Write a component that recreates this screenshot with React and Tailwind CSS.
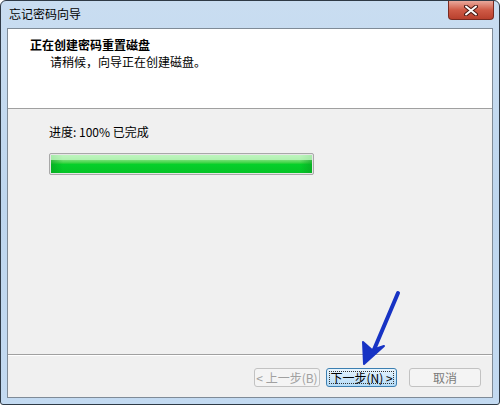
export default function App() {
  const font = { fontFamily: '"Noto Sans CJK SC", "Liberation Sans", sans-serif' };
  return (
    <div className="relative w-[500px] h-[405px] bg-white" style={font}>
      <div className="w-[500px] h-[405px] flex flex-col border border-[#2f3a46] rounded-t-[6px] rounded-b-[3px] bg-gradient-to-b from-[#c9ddf1] via-[#bed6ee] to-[#c3daf1] px-[6px] pb-[6px] overflow-hidden">
        <div className="h-[27px] flex justify-between shrink-0">
          <div className="pl-[2px] pt-[5px] text-[12px] leading-[16px] text-black">忘记密码向导</div>
          <div className="w-[46px] h-[19px] -mr-[1px] rounded-b-[4px] border border-t-0 border-[#7a2a20] bg-gradient-to-b from-[#e9a89c] via-[#cf5a46] to-[#b8402d] flex items-center justify-center">
            <svg width="14" height="11" viewBox="0 0 14 11">
              <path d="M2 1.5 L12 9.5 M12 1.5 L2 9.5" stroke="#4a1a14" strokeWidth="4" strokeLinecap="round" />
              <path d="M2 1.5 L12 9.5 M12 1.5 L2 9.5" stroke="#ffffff" strokeWidth="2" strokeLinecap="round" />
            </svg>
          </div>
        </div>
        <div className="flex-1 flex flex-col bg-[#f0f0f0] border border-[#7f8b97]">
          <div className="h-[80px] shrink-0 bg-white border-b border-[#a0a0a0] pl-[22px] pt-[7px]">
            <div className="text-[12px] leading-[18px] font-bold text-black">正在创建密码重置磁盘</div>
            <div className="pl-[20px] text-[12px] leading-[16px] text-black">请稍候，向导正在创建磁盘。</div>
          </div>
          <div className="flex-1 pl-[41px] pt-[15px]">
            <div className="text-[12px] leading-[16px] text-black">进度: 100% 已完成</div>
            <div className="mt-[13px] w-[265px] h-[22px] border border-[#a8a8a8] rounded-[2px] p-[1px] bg-[#e6e6e6]">
              <div className="w-full h-full relative bg-gradient-to-b from-[#b6f2b6] via-[#05d02b] to-[#04c426]">
                <div className="absolute left-0 top-0 bottom-0 w-[12px] bg-gradient-to-r from-[#0a9f22] to-transparent opacity-60" />
                <div className="absolute right-0 top-0 bottom-0 w-[12px] bg-gradient-to-l from-[#0a9f22] to-transparent opacity-60" />
                <div className="absolute left-0 right-0 top-0 h-[5px] bg-[#bff5bf] opacity-80" />
              </div>
            </div>
          </div>
          <div className="h-[2px] shrink-0 border-t border-[#a0a0a0] border-b border-b-white" />
          <div className="h-[41px] shrink-0 flex items-center justify-end pr-[11px]">
            <div className="w-[66px] h-[19px] mt-[2px] rounded-[3px] border border-[#c2c2c2] bg-[#f4f4f4] flex items-center justify-center text-[12px] text-[#a0a0a0]">&lt; 上一步(B)</div>
            <div className="ml-[6px] w-[71px] h-[19px] mt-[2px] rounded-[3px] border border-[#3c7fb1] bg-gradient-to-b from-[#e8f5fd] to-[#b4dbf7] p-[2px]">
              <div className="w-full h-full border border-dotted border-[#333] flex items-center justify-center text-[12px] text-black">下一步(N) &gt;</div>
            </div>
            <div className="ml-[12px] w-[72px] h-[19px] mt-[2px] rounded-[3px] border border-[#c2c2c2] bg-[#f4f4f4] flex items-center justify-center text-[12px] text-[#7a7a7a]">取消</div>
          </div>
        </div>
      </div>
      <svg className="absolute left-0 top-0" width="500" height="405" viewBox="0 0 500 405">
        <path d="M398 293 L373 352" stroke="#1733c4" strokeWidth="4" strokeLinecap="round" fill="none" />
        <path d="M364 364 L363 342 L372 350 L384 346 Z" fill="#1733c4" stroke="#1733c4" strokeWidth="2" strokeLinejoin="round" />
      </svg>
    </div>
  );
}
